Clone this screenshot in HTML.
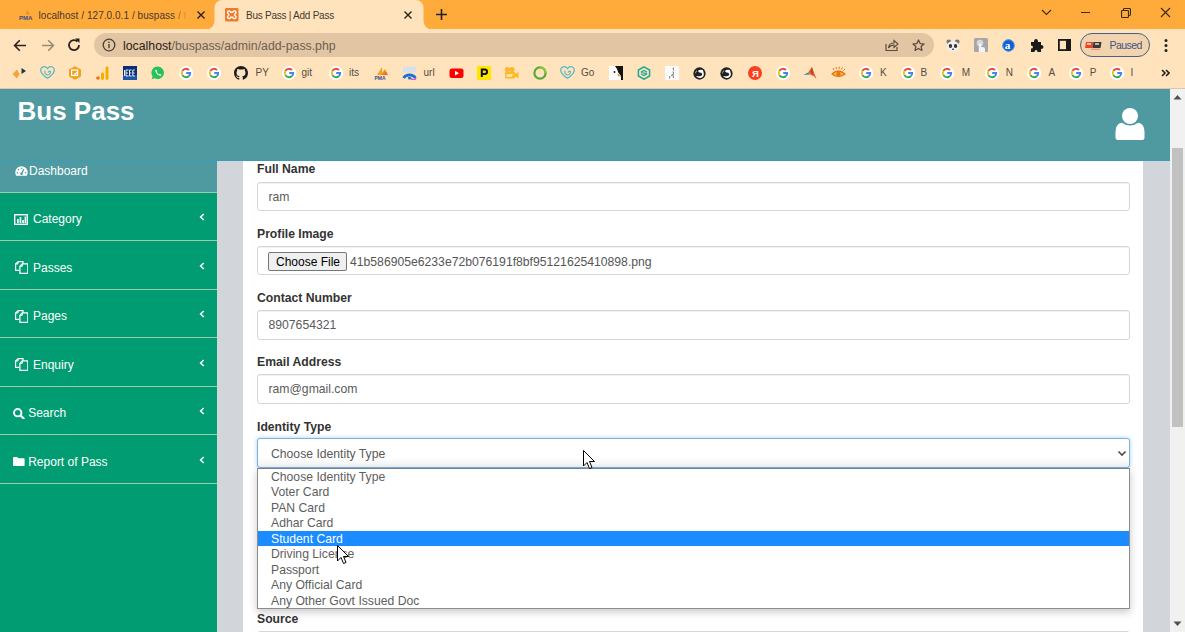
<!DOCTYPE html>
<html><head><meta charset="utf-8">
<style>
*{box-sizing:border-box;margin:0;padding:0}
html,body{width:1185px;height:632px;overflow:hidden;background:#fff;font-family:"Liberation Sans",sans-serif;position:relative}
.a{position:absolute}
#tabbar{left:0;top:0;width:1185px;height:29px;background:#ffab3b}
#toolbar{left:0;top:29px;width:1185px;height:59px;background:#ffe3bc}
#sep{left:0;top:88px;width:1185px;height:1px;background:#d8c7ad}
#page{left:0;top:89px;width:1185px;height:543px;background:#d2d5da;overflow:hidden}
#header{left:0;top:0;width:1170px;height:72px;background:#4e9aa0;border-bottom:1px solid #3a9cb6}
#sidebar{left:0;top:72px;width:217px;height:471px;background:#029c72}
#content{left:243px;top:72px;width:900px;height:471px;background:#fff}
#scroll{left:1170px;top:0;width:15px;height:543px;background:#f1f1f1}
.tabtxt{font-size:10px;line-height:12px;letter-spacing:-0.25px;color:#45392c;white-space:nowrap}
.bm{font-size:10px;line-height:12px;color:#574b41;white-space:nowrap}
.lbl{position:absolute;left:257px;font-size:12.2px;font-weight:bold;color:#333;white-space:nowrap;line-height:14px}
.inp{position:absolute;left:257px;width:873px;height:29px;border:1px solid #d6d6d6;border-radius:3px;background:#fff;box-shadow:inset 0 1px 1px rgba(0,0,0,.06)}
.itxt{position:absolute;left:10.5px;top:6.6px;font-size:12.2px;color:#5a5a5a;line-height:14px;white-space:nowrap}
.side{position:absolute;left:0;width:217px;height:1px;background:#9ccbae}
.stxt{position:absolute;font-size:12px;color:#fff;white-space:nowrap;line-height:14px}
.chev{position:absolute;left:199px;width:6px;height:8px}
.opt{position:absolute;left:0;width:871px;height:15.5px;font-size:12.2px;color:#5e5e5e;line-height:15px;padding-left:13px;white-space:nowrap}
</style></head><body>
<!-- ============ CHROME ============ -->
<div id="tabbar" class="a"></div>
<div id="toolbar" class="a"></div>
<!-- active tab -->
<svg class="a" style="left:205px;top:0" width="230" height="30" viewBox="0 0 230 30">
  <path d="M0 29.5 Q9.5 29.5 9.5 20 L9.5 8.5 Q9.5 0 18 0 L210 0 Q218.5 0 218.5 8.5 L218.5 20 Q218.5 29.5 228 29.5 Z" fill="#ffe3bc"/>
</svg>
<!-- inactive tab content -->
<div class="a" style="left:18px;top:8px;width:16px;height:14px">
  <svg width="16" height="14" viewBox="0 0 16 14"><path d="M9 2 L12 7 L8 6 Z" fill="#f08a1c"/><text x="1" y="12" font-size="6" font-weight="bold" fill="#3a4a8a" font-family="Liberation Sans">PMA</text></svg>
</div>
<div class="a tabtxt" style="left:38.5px;top:9.9px;width:152px;overflow:hidden;letter-spacing:0.05px">localhost / 127.0.0.1 / buspass / t</div><div class="a" style="left:172px;top:6px;width:20px;height:16px;background:linear-gradient(to right,rgba(255,171,59,0),#ffab3b 80%)"></div>
<svg class="a" style="left:196px;top:10px" width="10" height="10" viewBox="0 0 10 10"><path d="M1.5 1.5 L8.5 8.5 M8.5 1.5 L1.5 8.5" stroke="#2a2015" stroke-width="1.4"/></svg>
<!-- active tab content -->
<svg class="a" style="left:225px;top:8px" width="13.5" height="13.5" viewBox="0 0 14 14"><rect x="0" y="0" width="14" height="14" rx="1.5" fill="#ee7a2c"/><path d="M4.2 3 Q2.6 3 2.6 4.6 Q2.6 5.8 3.8 6.3 L3.8 7.7 Q2.6 8.2 2.6 9.4 Q2.6 11 4.2 11 Q5.6 11 6 9.6 H8 Q8.4 11 9.8 11 Q11.4 11 11.4 9.4 Q11.4 8.2 10.2 7.7 L10.2 6.3 Q11.4 5.8 11.4 4.6 Q11.4 3 9.8 3 Q8.4 3 8 4.4 H6 Q5.6 3 4.2 3 Z" fill="none" stroke="#fff" stroke-width="1.4"/></svg>
<div class="a tabtxt" style="left:246px;top:9.9px">Bus Pass | Add Pass</div>
<svg class="a" style="left:403px;top:10px" width="10" height="10" viewBox="0 0 10 10"><path d="M1.5 1.5 L8.5 8.5 M8.5 1.5 L1.5 8.5" stroke="#2a2015" stroke-width="1.4"/></svg>
<svg class="a" style="left:435px;top:8px" width="13" height="13" viewBox="0 0 13 13"><path d="M6.5 1 V12 M1 6.5 H12" stroke="#222" stroke-width="1.6"/></svg>
<!-- window controls -->
<svg class="a" style="left:1040.5px;top:8.5px" width="11" height="8" viewBox="0 0 11 8"><path d="M1 1 L5.5 5.5 L10 1" fill="none" stroke="#3a2a10" stroke-width="1.1"/></svg>
<div class="a" style="left:1081px;top:12px;width:9px;height:1px;background:#3a2a10"></div>
<svg class="a" style="left:1120.5px;top:7.5px" width="10" height="10" viewBox="0 0 10 10"><rect x="0.55" y="2.55" width="6.9" height="6.9" rx="0.8" fill="none" stroke="#3a2a10" stroke-width="1.1"/><path d="M2.5 2.5 V1.4 Q2.5 0.55 3.4 0.55 H8.6 Q9.45 0.55 9.45 1.4 V6.6 Q9.45 7.45 8.6 7.45 H7.5" fill="none" stroke="#3a2a10" stroke-width="1.1"/></svg>
<svg class="a" style="left:1160px;top:7px" width="11" height="11" viewBox="0 0 11 11"><path d="M1 1 L10 10 M10 1 L1 10" stroke="#3a2a10" stroke-width="1.1"/></svg>

<!-- toolbar nav -->
<svg class="a" style="left:12.5px;top:38.5px" width="14" height="13" viewBox="0 0 14 13"><path d="M13 6.5 H1.8 M6.8 1.3 L1.6 6.5 L6.8 11.7" fill="none" stroke="#2a2420" stroke-width="1.6"/></svg>
<svg class="a" style="left:40.5px;top:38.5px" width="14" height="13" viewBox="0 0 14 13"><path d="M1 6.5 H12.2 M7.2 1.3 L12.4 6.5 L7.2 11.7" fill="none" stroke="#9a8a78" stroke-width="1.6"/></svg>
<svg class="a" style="left:66px;top:37px" width="16" height="16" viewBox="0 0 16 16"><path d="M13 8 A5 5 0 1 1 11.5 4.5" fill="none" stroke="#2a2420" stroke-width="1.8"/><path d="M9 1.5 L13.5 1.5 L13.5 6 Z" fill="#2a2420"/></svg>
<!-- address bar -->
<div class="a" style="left:94px;top:33px;width:840px;height:24px;border-radius:12px;background:#e2c6a3"></div>
<svg class="a" style="left:102px;top:38px" width="14" height="14" viewBox="0 0 14 14"><circle cx="7" cy="7" r="5.8" fill="none" stroke="#4a3f35" stroke-width="1.3"/><rect x="6.3" y="6" width="1.4" height="4.2" fill="#4a3f35"/><rect x="6.3" y="3.6" width="1.4" height="1.4" fill="#4a3f35"/></svg>
<div class="a" style="left:123px;top:38.5px;font-size:12.3px;line-height:15px;white-space:nowrap;color:#6e6050"><span style="color:#2a2018">localhost</span>/buspass/admin/add-pass.php</div>
<!-- share / star -->
<svg class="a" style="left:884px;top:38px" width="15" height="14" viewBox="0 0 15 14"><path d="M2 6 V12.5 H13 V9" fill="none" stroke="#5a4c40" stroke-width="1.2"/><path d="M4.5 10 Q5 5 10 5 V2.5 L14 6 L10 9.5 V7 Q6.5 7 4.5 10 Z" fill="none" stroke="#5a4c40" stroke-width="1.2"/></svg>
<svg class="a" style="left:912px;top:39px" width="13" height="13" viewBox="0 0 15 15"><path d="M7.5 1.2 L9.4 5.3 L13.8 5.7 L10.5 8.7 L11.5 13.2 L7.5 10.9 L3.5 13.2 L4.5 8.7 L1.2 5.7 L5.6 5.3 Z" fill="none" stroke="#5a4c40" stroke-width="1.5" stroke-linejoin="round"/></svg>
<!-- extension icons -->
<svg class="a" style="left:945px;top:38px" width="16" height="15" viewBox="0 0 16 16"><circle cx="3.5" cy="4" r="2.5" fill="#777"/><circle cx="12.5" cy="4" r="2.5" fill="#777"/><ellipse cx="8" cy="9" rx="6.5" ry="5.8" fill="#eee"/><ellipse cx="5.3" cy="8.5" rx="1.8" ry="2.2" fill="#333"/><ellipse cx="10.7" cy="8.5" rx="1.8" ry="2.2" fill="#333"/><ellipse cx="8" cy="12" rx="1.2" ry="0.8" fill="#333"/></svg>
<svg class="a" style="left:974px;top:38px" width="14" height="14" viewBox="0 0 14 14"><rect width="14" height="14" rx="1.5" fill="#a6a6a6"/><circle cx="6" cy="5" r="3.3" fill="#d8d8d8"/><path d="M4.8 14 V6.5 Q4.8 5.3 6 5.3 Q7.2 5.3 7.2 6.5 V9 Q9 8.6 10.5 9.5 Q11.2 10.5 11 14 Z" fill="#f2f4f8"/></svg>
<svg class="a" style="left:1001.5px;top:38.5px" width="13" height="13" viewBox="0 0 14 14"><circle cx="7" cy="7" r="6.6" fill="#0f5fd6"/><circle cx="7" cy="7" r="6.2" fill="none" stroke="#7fb0f0" stroke-width="0.7"/><text x="2.9" y="10.8" font-size="12" font-weight="bold" fill="#fff" font-family="Liberation Serif">a</text></svg>
<svg class="a" style="left:1029px;top:38px" width="15" height="15" viewBox="0 0 15 15"><path d="M2 4 H5 Q5 1 7 1 Q9 1 9 4 H12 V7 Q14.5 7 14.5 9 Q14.5 11 12 11 V14 H8.5 Q8.5 12 7 12 Q5.5 12 5.5 14 H2 V10.5 Q4 10.5 4 9 Q4 7.5 2 7.5 Z" fill="#1a1a1a"/></svg>
<svg class="a" style="left:1058px;top:39px" width="13" height="12" viewBox="0 0 13 12"><rect x="0.9" y="0.9" width="11.2" height="10.2" fill="none" stroke="#1a1a1a" stroke-width="1.8"/><rect x="8" y="0.9" width="4.1" height="10.2" fill="#1a1a1a"/></svg>
<div class="a" style="left:1080px;top:33px;width:70px;height:24px;border-radius:12px;border:1.5px solid #4b5d85;background:#f1d4ae"></div>
<svg class="a" style="left:1084.5px;top:41.5px" width="17" height="8" viewBox="0 0 17 8"><path d="M1 0 H8.5 L7.5 6 H0 Z" fill="#e5472a"/><path d="M8.5 0 H16.5 L15.5 6 H7.5 Z" fill="#3c3a38"/><path d="M2 2 H6 M10 2 H14" stroke="#fff" stroke-width="1.6" opacity=".85"/><rect x="6" y="6.8" width="9" height="0.8" fill="#e5472a" opacity=".7"/></svg>
<div class="a" style="left:1109.5px;top:39px;font-size:10.5px;letter-spacing:-0.55px;line-height:12px;color:#3f5283">Paused</div>
<svg class="a" style="left:1163px;top:38px" width="6" height="15" viewBox="0 0 6 15"><circle cx="3" cy="2.5" r="1.5" fill="#222"/><circle cx="3" cy="7.5" r="1.5" fill="#222"/><circle cx="3" cy="12.5" r="1.5" fill="#222"/></svg>

<!-- bookmarks bar -->
<svg class="a" style="left:11px;top:66px" width="16" height="14" viewBox="0 0 16 14"><path d="M1.5 8 L6 3.5 L8.5 8 L6 12.5 Z" fill="#f7a23c"/><path d="M10.5 2 L15 5 L10.5 8 Z" fill="#173b40"/></svg>
<svg class="a" style="left:40px;top:66px" width="15" height="13" viewBox="0 0 15 13"><path d="M7.5 12.3 C2 8.5 0.7 6.5 0.7 4.2 C0.7 2 2.4 0.7 4.2 0.7 C5.6 0.7 6.8 1.5 7.5 2.5 C8.2 1.5 9.4 0.7 10.8 0.7 C12.6 0.7 14.3 2 14.3 4.2 C14.3 6.5 13 8.5 7.5 12.3 Z" fill="none" stroke="#5bb8c4" stroke-width="1.3"/><path d="M5 4.5 Q4 8 7.5 9 Q10.5 8.5 10.5 5.5 Q9 4.5 8 6.5" fill="none" stroke="#5bb8c4" stroke-width="1.1"/></svg>
<svg class="a" style="left:68px;top:66px" width="14" height="14" viewBox="0 0 14 14"><path d="M7 0.3 L13 3.5 V10.5 L7 13.7 L1 10.5 V3.5 Z" fill="#f2a11c"/><rect x="3.6" y="4" width="6" height="5.5" fill="none" stroke="#fff" stroke-width="1.2"/><path d="M6 9 L9.5 6" stroke="#fff" stroke-width="1.2"/></svg>
<svg class="a" style="left:96px;top:66px" width="13" height="14" viewBox="0 0 13 14"><circle cx="2" cy="12" r="1.8" fill="#e8710a"/><rect x="5" y="6.5" width="3" height="7.5" rx="1.4" fill="#f9ab00"/><rect x="9.5" y="0.5" width="3" height="13.5" rx="1.4" fill="#f9ab00"/></svg>
<svg class="a" style="left:123px;top:66px" width="14" height="14" viewBox="0 0 14 14"><rect width="14" height="14" fill="#0a2e78"/><rect x="0" y="9" width="14" height="5" fill="#1d56a8"/><g fill="none" stroke="#e8eef8" stroke-width="1"><path d="M1.5 4 V10"/><path d="M5.5 4 H3 V10 H5.5 M3 7 H5"/><path d="M8.5 4 H6.5 V10 H8.5 M6.5 7 H8.3"/><path d="M11.8 4 H9.8 V10 H11.8 M9.8 7 H11.6"/></g></svg>
<svg class="a" style="left:151px;top:66px" width="14" height="14" viewBox="0 0 14 14"><path d="M7 0.5 A6.3 6.3 0 1 1 3.6 12.3 L0.6 13.3 L1.6 10.4 A6.3 6.3 0 0 1 7 0.5 Z" fill="#25c15a"/><path d="M4.3 4 Q4.2 6.3 6 8.1 Q7.8 9.9 10 9.7 L10.3 8.6 L8.8 7.9 L8.1 8.5 Q6.6 7.7 5.6 6 L6.2 5.3 L5.5 3.8 Z" fill="#fff"/></svg>
<svg class="a" style="left:179px;top:66px" width="14" height="14" viewBox="0 0 14 14"><circle cx="7" cy="7" r="7" fill="#fff"/><g fill="none" stroke-width="1.9"><path d="M7.2 7 H11.2 A4.2 4.2 0 0 1 9.97 9.97" stroke="#4285f4"/><path d="M9.97 9.97 A4.2 4.2 0 0 1 3.36 9.1" stroke="#34a853"/><path d="M3.36 9.1 A4.2 4.2 0 0 1 3.36 4.9" stroke="#fbbc05"/><path d="M3.36 4.9 A4.2 4.2 0 0 1 9.97 4.03" stroke="#ea4335"/></g></svg>
<svg class="a" style="left:206.5px;top:66px" width="14" height="14" viewBox="0 0 14 14"><circle cx="7" cy="7" r="7" fill="#fff"/><g fill="none" stroke-width="1.9"><path d="M7.2 7 H11.2 A4.2 4.2 0 0 1 9.97 9.97" stroke="#4285f4"/><path d="M9.97 9.97 A4.2 4.2 0 0 1 3.36 9.1" stroke="#34a853"/><path d="M3.36 9.1 A4.2 4.2 0 0 1 3.36 4.9" stroke="#fbbc05"/><path d="M3.36 4.9 A4.2 4.2 0 0 1 9.97 4.03" stroke="#ea4335"/></g></svg>
<svg class="a" style="left:234px;top:66px" width="14" height="14" viewBox="0 0 16 16"><path fill="#1b1f23" d="M8 0C3.58 0 0 3.58 0 8c0 3.54 2.29 6.53 5.47 7.59.4.07.55-.17.55-.38 0-.19-.01-.82-.01-1.49-2.01.37-2.53-.49-2.69-.94-.09-.23-.48-.94-.82-1.13-.28-.15-.68-.52-.01-.53.63-.01 1.08.58 1.23.82.72 1.21 1.87.87 2.33.66.07-.52.28-.87.51-1.07-1.78-.2-3.64-.89-3.64-3.95 0-.87.31-1.59.82-2.15-.08-.2-.36-1.02.08-2.12 0 0 .67-.21 2.2.82.64-.18 1.32-.27 2-.27.68 0 1.36.09 2 .27 1.53-1.04 2.2-.82 2.2-.82.44 1.1.16 1.92.08 2.12.51.56.82 1.27.82 2.15 0 3.07-1.87 3.75-3.65 3.95.29.25.54.73.54 1.48 0 1.07-.01 1.93-.01 2.2 0 .21.15.46.55.38A8.013 8.013 0 0016 8c0-4.42-3.58-8-8-8z"/></svg>
<div class="a bm" style="left:255.5px;top:66.5px">PY</div>
<svg class="a" style="left:281.5px;top:66px" width="14" height="14" viewBox="0 0 14 14"><circle cx="7" cy="7" r="7" fill="#fff"/><g fill="none" stroke-width="1.9"><path d="M7.2 7 H11.2 A4.2 4.2 0 0 1 9.97 9.97" stroke="#4285f4"/><path d="M9.97 9.97 A4.2 4.2 0 0 1 3.36 9.1" stroke="#34a853"/><path d="M3.36 9.1 A4.2 4.2 0 0 1 3.36 4.9" stroke="#fbbc05"/><path d="M3.36 4.9 A4.2 4.2 0 0 1 9.97 4.03" stroke="#ea4335"/></g></svg>
<div class="a bm" style="left:301.5px;top:66.5px">git</div>
<svg class="a" style="left:329px;top:66px" width="14" height="14" viewBox="0 0 14 14"><circle cx="7" cy="7" r="7" fill="#fff"/><g fill="none" stroke-width="1.9"><path d="M7.2 7 H11.2 A4.2 4.2 0 0 1 9.97 9.97" stroke="#4285f4"/><path d="M9.97 9.97 A4.2 4.2 0 0 1 3.36 9.1" stroke="#34a853"/><path d="M3.36 9.1 A4.2 4.2 0 0 1 3.36 4.9" stroke="#fbbc05"/><path d="M3.36 4.9 A4.2 4.2 0 0 1 9.97 4.03" stroke="#ea4335"/></g></svg>
<div class="a bm" style="left:349px;top:66.5px">its</div>
<svg class="a" style="left:374px;top:66px" width="15" height="14" viewBox="0 0 15 14"><path d="M3 9 L8 1 L8.5 9 Z" fill="#f7a21b"/><path d="M7 9 L11 3 L13 9 Z" fill="#f18d1b"/><path d="M9 9 L12 5 L14 9 Z" fill="#e8741c"/><text x="0.5" y="13.5" font-size="5" font-weight="bold" fill="#3f4e8c" font-family="Liberation Sans">PMA</text></svg>
<svg class="a" style="left:401.5px;top:66px" width="15" height="14" viewBox="0 0 15 14"><rect x="1" y="0.5" width="13" height="6" fill="#cfe0f2" opacity=".8"/><path d="M1.5 12 A7 6.5 0 0 1 13.5 12" fill="none" stroke="#1e70d6" stroke-width="2.6"/><path d="M9 12 A2.5 2.5 0 0 0 13.8 12" fill="none" stroke="#c35bd6" stroke-width="1.5"/><circle cx="7.5" cy="12" r="1.6" fill="#1e70d6"/></svg>
<div class="a bm" style="left:423.5px;top:66.5px">url</div>
<svg class="a" style="left:449px;top:66px" width="15" height="14" viewBox="0 0 15 14"><rect x="0.5" y="2.5" width="14" height="9.5" rx="2.5" fill="#f00"/><path d="M6 4.8 L10 7.2 L6 9.6 Z" fill="#fff"/></svg>
<svg class="a" style="left:477px;top:66px" width="14" height="14" viewBox="0 0 14 14"><rect width="14" height="14" fill="#ffe500"/><path d="M4.8 11 V3.5 H7.8 Q10 3.5 10 5.8 Q10 8 7.8 8 H4.8" fill="none" stroke="#111" stroke-width="2"/></svg>
<svg class="a" style="left:504px;top:66px" width="15" height="14" viewBox="0 0 15 14"><circle cx="3.5" cy="3.5" r="2.6" fill="#fbb827"/><circle cx="8" cy="3.5" r="2.6" fill="#fbb827"/><rect x="1" y="6" width="10" height="6.5" rx="1" fill="#fbb827"/><path d="M11 8 L14.5 6 V12.5 L11 10.5 Z" fill="#fbb827"/><text x="2.2" y="11.3" font-size="4" fill="#fff" font-family="Liberation Sans" font-weight="bold">GIF</text></svg>
<svg class="a" style="left:532.5px;top:66px" width="14" height="14" viewBox="0 0 14 14"><circle cx="7" cy="7" r="5.6" fill="none" stroke="#58a83a" stroke-width="2.2"/><path d="M7 1.4 A5.6 5.6 0 0 1 12.6 7" fill="none" stroke="#8cc63f" stroke-width="2.2"/></svg>
<svg class="a" style="left:560px;top:66px" width="15" height="13" viewBox="0 0 15 13"><path d="M7.5 12.3 C2 8.5 0.7 6.5 0.7 4.2 C0.7 2 2.4 0.7 4.2 0.7 C5.6 0.7 6.8 1.5 7.5 2.5 C8.2 1.5 9.4 0.7 10.8 0.7 C12.6 0.7 14.3 2 14.3 4.2 C14.3 6.5 13 8.5 7.5 12.3 Z" fill="none" stroke="#5bb8c4" stroke-width="1.3"/><path d="M5 4.5 Q4 8 7.5 9 Q10.5 8.5 10.5 5.5 Q9 4.5 8 6.5" fill="none" stroke="#5bb8c4" stroke-width="1.1"/></svg>
<div class="a bm" style="left:581px;top:66.5px">Go</div>
<svg class="a" style="left:609px;top:66px" width="14" height="14" viewBox="0 0 14 14"><rect width="14" height="14" fill="#fff"/><path d="M6 0 H14 V14 H12 Q12.5 9 9.5 7 Q8.5 3 6 0 Z" fill="#111"/><circle cx="5.5" cy="6" r="0.9" fill="#111"/><path d="M8.5 7.5 L12 9.5 L9 10.5 Z" fill="#f6921e"/></svg>
<svg class="a" style="left:637px;top:66px" width="14" height="14" viewBox="0 0 14 14"><path d="M7 0.8 L12.6 4 V10 L7 13.2 L1.4 10 V4 Z" fill="none" stroke="#1ea896" stroke-width="1.5"/><path d="M3.8 6.3 L7 4.4 L10 6 M4 8 L7 9.6 L10.2 7.7 M4 6.3 L10 7.7" fill="none" stroke="#1ea896" stroke-width="1.3"/></svg>
<svg class="a" style="left:664.5px;top:66px" width="14" height="14" viewBox="0 0 14 14"><rect width="14" height="14" fill="#fbfbfb"/><path d="M8.5 1.5 Q7.5 3 8.8 4.5 M8 5.5 Q9 7 8 8.5 L6 9.5 M8 8.5 L8.5 12 M5 10 L4.5 12.5" fill="none" stroke="#666" stroke-width="0.9"/></svg>
<svg class="a" style="left:692.5px;top:66.5px" width="13" height="13" viewBox="0 0 14 14"><circle cx="7" cy="7" r="6.6" fill="#222"/><path d="M10.5 3.2 Q7.5 2.3 5.2 4.2 Q6.8 6.3 9 6.2 Q10.8 7.3 9.2 9.3 Q6.5 10.3 3.2 9.8 Q5.5 12.5 9 11.6 Q12.2 10 11.6 7 Q11.2 4.5 10.5 3.2 Z M2.2 7.2 Q2.5 4.8 4.3 3.2 Q4 5.5 2.2 7.2 Z" fill="#fff"/></svg>
<svg class="a" style="left:720px;top:66.5px" width="13" height="13" viewBox="0 0 14 14"><circle cx="7" cy="7" r="6.6" fill="#222"/><path d="M10.5 3.2 Q7.5 2.3 5.2 4.2 Q6.8 6.3 9 6.2 Q10.8 7.3 9.2 9.3 Q6.5 10.3 3.2 9.8 Q5.5 12.5 9 11.6 Q12.2 10 11.6 7 Q11.2 4.5 10.5 3.2 Z M2.2 7.2 Q2.5 4.8 4.3 3.2 Q4 5.5 2.2 7.2 Z" fill="#fff"/></svg>
<svg class="a" style="left:747.5px;top:66px" width="14" height="14" viewBox="0 0 14 14"><circle cx="7" cy="7" r="7" fill="#fc3f1d"/><text x="4" y="11" font-size="9.5" font-weight="bold" fill="#fff" font-family="Liberation Sans">Я</text></svg>
<svg class="a" style="left:776px;top:66px" width="14" height="14" viewBox="0 0 14 14"><circle cx="7" cy="7" r="7" fill="#fff"/><g fill="none" stroke-width="1.9"><path d="M7.2 7 H11.2 A4.2 4.2 0 0 1 9.97 9.97" stroke="#4285f4"/><path d="M9.97 9.97 A4.2 4.2 0 0 1 3.36 9.1" stroke="#34a853"/><path d="M3.36 9.1 A4.2 4.2 0 0 1 3.36 4.9" stroke="#fbbc05"/><path d="M3.36 4.9 A4.2 4.2 0 0 1 9.97 4.03" stroke="#ea4335"/></g></svg>
<svg class="a" style="left:803px;top:66px" width="14" height="14" viewBox="0 0 14 14"><path d="M0.5 9 L5 6.5 L7 8.5 Z" fill="#3b7fc4"/><path d="M5 6.5 L9 1 L13.5 13 L10.5 10 L7 8.5 Z" fill="#e16737"/><path d="M9 1 L7.5 6 L10.5 10 Z" fill="#b7421a"/></svg>
<svg class="a" style="left:830.5px;top:66px" width="15" height="14" viewBox="0 0 15 14"><path d="M1 8 Q7.5 2 14 8 Q7.5 13 1 8 Z" fill="#fbc02d" stroke="#e8731a" stroke-width="1.2"/><circle cx="7.5" cy="8" r="2.2" fill="#e8731a"/><path d="M3 4 L2 2 M5.5 3 L5 1 M8 3 L8.3 0.8 M10.5 3.3 L11.5 1.5 M12.5 4.5 L14 3" stroke="#e8731a" stroke-width="1"/></svg>
<svg class="a" style="left:859px;top:66px" width="14" height="14" viewBox="0 0 14 14"><circle cx="7" cy="7" r="7" fill="#fff"/><g fill="none" stroke-width="1.9"><path d="M7.2 7 H11.2 A4.2 4.2 0 0 1 9.97 9.97" stroke="#4285f4"/><path d="M9.97 9.97 A4.2 4.2 0 0 1 3.36 9.1" stroke="#34a853"/><path d="M3.36 9.1 A4.2 4.2 0 0 1 3.36 4.9" stroke="#fbbc05"/><path d="M3.36 4.9 A4.2 4.2 0 0 1 9.97 4.03" stroke="#ea4335"/></g></svg>
<div class="a bm" style="left:880px;top:66.5px">K</div>
<svg class="a" style="left:900.5px;top:66px" width="14" height="14" viewBox="0 0 14 14"><circle cx="7" cy="7" r="7" fill="#fff"/><g fill="none" stroke-width="1.9"><path d="M7.2 7 H11.2 A4.2 4.2 0 0 1 9.97 9.97" stroke="#4285f4"/><path d="M9.97 9.97 A4.2 4.2 0 0 1 3.36 9.1" stroke="#34a853"/><path d="M3.36 9.1 A4.2 4.2 0 0 1 3.36 4.9" stroke="#fbbc05"/><path d="M3.36 4.9 A4.2 4.2 0 0 1 9.97 4.03" stroke="#ea4335"/></g></svg>
<div class="a bm" style="left:920.5px;top:66.5px">B</div>
<svg class="a" style="left:940.3px;top:66px" width="14" height="14" viewBox="0 0 14 14"><circle cx="7" cy="7" r="7" fill="#fff"/><g fill="none" stroke-width="1.9"><path d="M7.2 7 H11.2 A4.2 4.2 0 0 1 9.97 9.97" stroke="#4285f4"/><path d="M9.97 9.97 A4.2 4.2 0 0 1 3.36 9.1" stroke="#34a853"/><path d="M3.36 9.1 A4.2 4.2 0 0 1 3.36 4.9" stroke="#fbbc05"/><path d="M3.36 4.9 A4.2 4.2 0 0 1 9.97 4.03" stroke="#ea4335"/></g></svg>
<div class="a bm" style="left:961.8px;top:66.5px">M</div>
<svg class="a" style="left:985px;top:66px" width="14" height="14" viewBox="0 0 14 14"><circle cx="7" cy="7" r="7" fill="#fff"/><g fill="none" stroke-width="1.9"><path d="M7.2 7 H11.2 A4.2 4.2 0 0 1 9.97 9.97" stroke="#4285f4"/><path d="M9.97 9.97 A4.2 4.2 0 0 1 3.36 9.1" stroke="#34a853"/><path d="M3.36 9.1 A4.2 4.2 0 0 1 3.36 4.9" stroke="#fbbc05"/><path d="M3.36 4.9 A4.2 4.2 0 0 1 9.97 4.03" stroke="#ea4335"/></g></svg>
<div class="a bm" style="left:1005.7px;top:66.5px">N</div>
<svg class="a" style="left:1027.3px;top:66px" width="14" height="14" viewBox="0 0 14 14"><circle cx="7" cy="7" r="7" fill="#fff"/><g fill="none" stroke-width="1.9"><path d="M7.2 7 H11.2 A4.2 4.2 0 0 1 9.97 9.97" stroke="#4285f4"/><path d="M9.97 9.97 A4.2 4.2 0 0 1 3.36 9.1" stroke="#34a853"/><path d="M3.36 9.1 A4.2 4.2 0 0 1 3.36 4.9" stroke="#fbbc05"/><path d="M3.36 4.9 A4.2 4.2 0 0 1 9.97 4.03" stroke="#ea4335"/></g></svg>
<div class="a bm" style="left:1048.4px;top:66.5px">A</div>
<svg class="a" style="left:1069.4px;top:66px" width="14" height="14" viewBox="0 0 14 14"><circle cx="7" cy="7" r="7" fill="#fff"/><g fill="none" stroke-width="1.9"><path d="M7.2 7 H11.2 A4.2 4.2 0 0 1 9.97 9.97" stroke="#4285f4"/><path d="M9.97 9.97 A4.2 4.2 0 0 1 3.36 9.1" stroke="#34a853"/><path d="M3.36 9.1 A4.2 4.2 0 0 1 3.36 4.9" stroke="#fbbc05"/><path d="M3.36 4.9 A4.2 4.2 0 0 1 9.97 4.03" stroke="#ea4335"/></g></svg>
<div class="a bm" style="left:1089.7px;top:66.5px">P</div>
<svg class="a" style="left:1109.7px;top:66px" width="14" height="14" viewBox="0 0 14 14"><circle cx="7" cy="7" r="7" fill="#fff"/><g fill="none" stroke-width="1.9"><path d="M7.2 7 H11.2 A4.2 4.2 0 0 1 9.97 9.97" stroke="#4285f4"/><path d="M9.97 9.97 A4.2 4.2 0 0 1 3.36 9.1" stroke="#34a853"/><path d="M3.36 9.1 A4.2 4.2 0 0 1 3.36 4.9" stroke="#fbbc05"/><path d="M3.36 4.9 A4.2 4.2 0 0 1 9.97 4.03" stroke="#ea4335"/></g></svg>
<div class="a bm" style="left:1130.6px;top:66.5px">I</div>
<svg class="a" style="left:1161px;top:69px" width="9" height="8" viewBox="0 0 9 8"><path d="M1 1 L4 4 L1 7 M5 1 L8 4 L5 7" fill="none" stroke="#222" stroke-width="1.6"/></svg>

<div id="sep" class="a"></div>

<!-- ============ PAGE ============ -->
<div id="page" class="a">
  <div id="header" class="a">
    <div class="a" style="left:17.5px;top:6.8px;font-size:26px;font-weight:bold;color:#fff;line-height:30px;white-space:nowrap">Bus Pass</div>
    <svg class="a" style="left:1114px;top:17px" width="32" height="36" viewBox="0 0 32 36">
      <circle cx="16" cy="10" r="8" fill="#fff"/>
      <path d="M1.5 34 V26 Q1.5 17.5 8 16.8 Q11.5 19.6 16 19.6 Q20.5 19.6 24 16.8 Q30.5 17.5 30.5 26 V31.5 Q30.5 34 28 34 H4 Q1.5 34 1.5 31.5 Z" fill="#fff"/>
    </svg>
  </div>
  <!-- dashboard item (teal) -->
<div class="a" style="left:0;top:72px;width:217px;height:31px;background:#4e9aa0"></div>
<div id="sidebar" class="a" style="top:104px;height:439px"></div>
<div class="a" style="left:243px;top:72px;width:900px;height:471px;background:#fff"></div>
<div class="side" style="top:103px"></div>
<div class="side" style="top:151px"></div>
<div class="side" style="top:200px"></div>
<div class="side" style="top:248px"></div>
<div class="side" style="top:297px"></div>
<div class="side" style="top:345px"></div>
<div class="side" style="top:394px"></div>
<svg class="a" style="left:14.5px;top:76.5px" width="13" height="10" viewBox="0 0 13 10"><path d="M6.5 0.3 A6.2 6.2 0 0 0 0.3 6.5 Q0.3 8.3 1.2 9.7 H11.8 Q12.7 8.3 12.7 6.5 A6.2 6.2 0 0 0 6.5 0.3 Z" fill="#fff"/><path d="M6.5 7.8 L8.8 3.2" stroke="#4e9aa0" stroke-width="1.3"/><circle cx="6.5" cy="7.8" r="1.3" fill="#4e9aa0"/><circle cx="2.4" cy="6.8" r=".8" fill="#4e9aa0"/><circle cx="3.6" cy="3.6" r=".8" fill="#4e9aa0"/><circle cx="6.5" cy="2.3" r=".8" fill="#4e9aa0"/><circle cx="10.6" cy="6.8" r=".8" fill="#4e9aa0"/></svg>
<div class="stxt" style="left:29px;top:74.6px">Dashboard</div>
<svg class="a" style="left:14px;top:124.5px" width="14" height="11" viewBox="0 0 14 11"><rect x="0.7" y="0.7" width="12.6" height="9.6" fill="none" stroke="#fff" stroke-width="1.4"/><rect x="3" y="5" width="1.7" height="4" fill="#fff"/><rect x="5.6" y="3" width="1.7" height="6" fill="#fff"/><rect x="8.2" y="6" width="1.7" height="3" fill="#fff"/><rect x="10.6" y="2.5" width="1.5" height="6.5" fill="#fff"/></svg>
<div class="stxt" style="left:33px;top:122.8px">Category</div>
<svg class="chev" style="top:124px" viewBox="0 0 6 8"><path d="M4.8 1 L1.6 4 L4.8 7" fill="none" stroke="#fff" stroke-width="1.5"/></svg>
<svg class="a" style="left:14.5px;top:172.3px" width="13.5" height="13" viewBox="0 0 13.5 13"><path d="M3 0.6 H8 V2.8 M3 0.6 L0.6 3 V9.4 H4.4" fill="none" stroke="#fff" stroke-width="1.2"/><path d="M3 0.6 V3 H0.6" fill="none" stroke="#fff" stroke-width="1"/><path d="M7.3 2.9 H12.8 V12.4 H4.9 V5.3 Z" fill="none" stroke="#fff" stroke-width="1.2"/><path d="M7.3 2.9 V5.3 H4.9" fill="none" stroke="#fff" stroke-width="1"/></svg>
<div class="stxt" style="left:33px;top:171.6px">Passes</div>
<svg class="chev" style="top:172.8px" viewBox="0 0 6 8"><path d="M4.8 1 L1.6 4 L4.8 7" fill="none" stroke="#fff" stroke-width="1.5"/></svg>
<svg class="a" style="left:14.5px;top:220.85px" width="13.5" height="13" viewBox="0 0 13.5 13"><path d="M3 0.6 H8 V2.8 M3 0.6 L0.6 3 V9.4 H4.4" fill="none" stroke="#fff" stroke-width="1.2"/><path d="M3 0.6 V3 H0.6" fill="none" stroke="#fff" stroke-width="1"/><path d="M7.3 2.9 H12.8 V12.4 H4.9 V5.3 Z" fill="none" stroke="#fff" stroke-width="1.2"/><path d="M7.3 2.9 V5.3 H4.9" fill="none" stroke="#fff" stroke-width="1"/></svg>
<div class="stxt" style="left:33px;top:220.15px">Pages</div>
<svg class="chev" style="top:221.35px" viewBox="0 0 6 8"><path d="M4.8 1 L1.6 4 L4.8 7" fill="none" stroke="#fff" stroke-width="1.5"/></svg>
<svg class="a" style="left:14.5px;top:269.4px" width="13.5" height="13" viewBox="0 0 13.5 13"><path d="M3 0.6 H8 V2.8 M3 0.6 L0.6 3 V9.4 H4.4" fill="none" stroke="#fff" stroke-width="1.2"/><path d="M3 0.6 V3 H0.6" fill="none" stroke="#fff" stroke-width="1"/><path d="M7.3 2.9 H12.8 V12.4 H4.9 V5.3 Z" fill="none" stroke="#fff" stroke-width="1.2"/><path d="M7.3 2.9 V5.3 H4.9" fill="none" stroke="#fff" stroke-width="1"/></svg>
<div class="stxt" style="left:33px;top:268.7px">Enquiry</div>
<svg class="chev" style="top:269.9px" viewBox="0 0 6 8"><path d="M4.8 1 L1.6 4 L4.8 7" fill="none" stroke="#fff" stroke-width="1.5"/></svg>
<svg class="a" style="left:13px;top:318.9px" width="12" height="11" viewBox="0 0 12 11"><circle cx="4.7" cy="4.7" r="3.7" fill="none" stroke="#fff" stroke-width="1.9"/><path d="M7.6 7.6 L10.6 10.3" stroke="#fff" stroke-width="2.2" stroke-linecap="round"/></svg>
<div class="stxt" style="left:28.2px;top:317.2px">Search</div>
<svg class="chev" style="top:318.4px" viewBox="0 0 6 8"><path d="M4.8 1 L1.6 4 L4.8 7" fill="none" stroke="#fff" stroke-width="1.5"/></svg>
<svg class="a" style="left:13px;top:368px" width="12" height="9" viewBox="0 0 12 9"><path d="M0 1 Q0 0 1 0 H4.2 L5.4 1.3 H11 Q11.6 1.3 11.6 2 V8.3 Q11.6 9 11 9 H0.7 Q0 9 0 8.3 Z" fill="#fff"/></svg>
<div class="stxt" style="left:28.2px;top:365.8px">Report of Pass</div>
<svg class="chev" style="top:367px" viewBox="0 0 6 8"><path d="M4.8 1 L1.6 4 L4.8 7" fill="none" stroke="#fff" stroke-width="1.5"/></svg>
  <!-- scrollbar -->
  <div id="scroll" class="a"></div>
  <svg class="a" style="left:1173px;top:5px" width="9" height="6" viewBox="0 0 9 6"><path d="M0.5 5.5 L4.5 1 L8.5 5.5 Z" fill="#505050"/></svg>
  <div class="a" style="left:1172px;top:59px;width:11px;height:279px;background:#c1c1c1"></div>
  <svg class="a" style="left:1173px;top:532px" width="9" height="6" viewBox="0 0 9 6"><path d="M0.5 0.5 L4.5 5 L8.5 0.5 Z" fill="#505050"/></svg>
</div>
<!-- form -->
<div class="lbl" style="top:162px">Full Name</div>
<div class="inp" style="top:182px"><div class="itxt">ram</div></div>
<div class="lbl" style="top:226.5px">Profile Image</div>
<div class="inp" style="top:246px">
  <div class="a" style="left:10px;top:5px;width:79px;height:19px;background:#efefef;border:1px solid #767676;border-radius:2px"></div>
  <div class="a" style="left:18px;top:8px;font-size:12px;line-height:14px;color:#000;white-space:nowrap">Choose File</div>
  <div class="a" style="left:92px;top:8px;font-size:12.2px;line-height:14px;color:#555;white-space:nowrap">41b586905e6233e72b076191f8bf95121625410898.png</div>
</div>
<div class="lbl" style="top:291px">Contact Number</div>
<div class="inp" style="top:310px;height:30px"><div class="itxt">8907654321</div></div>
<div class="lbl" style="top:355px">Email Address</div>
<div class="inp" style="top:374px;height:30px"><div class="itxt">ram@gmail.com</div></div>
<div class="lbl" style="top:419.5px">Identity Type</div>
<div class="inp" style="top:438px;height:29.5px;border-color:#7eb3dd;box-shadow:0 0 4px rgba(102,175,233,.6)"><div class="a" style="left:0;bottom:0;width:871px;height:10px;background:linear-gradient(rgba(0,0,0,0),rgba(0,0,0,.05))"></div><div class="itxt" style="left:13px;top:8px">Choose Identity Type</div>
  <svg class="a" style="left:858.5px;top:11px" width="10" height="7" viewBox="0 0 10 7"><path d="M1.5 1.5 L5 5 L8.5 1.5" fill="none" stroke="#4a4a4a" stroke-width="1.6"/></svg>
</div>
<div class="lbl" style="top:612px">Source</div>
<div class="inp" style="top:631px"></div>
<!-- dropdown popup -->
<div class="a" style="left:257px;top:468px;width:873px;height:141px;background:#fff;border:1px solid #8c8c8c;border-top-color:#6f8499;box-shadow:0 3px 8px rgba(0,0,0,.22)">
  <div class="opt" style="top:0.6px">Choose Identity Type</div>
  <div class="opt" style="top:16.1px">Voter Card</div>
  <div class="opt" style="top:31.6px">PAN Card</div>
  <div class="opt" style="top:47.1px">Adhar Card</div>
  <div class="a" style="left:0;top:61.5px;width:871px;height:15.3px;background:#1a8cff"></div>
  <div class="opt" style="top:62.6px;color:#fff">Student Card</div>
  <div class="opt" style="top:78.1px">Driving License</div>
  <div class="opt" style="top:93.6px">Passport</div>
  <div class="opt" style="top:109.1px">Any Official Card</div>
  <div class="opt" style="top:124.6px">Any Other Govt Issued Doc</div>
</div>
<!-- cursors -->
<svg class="a" style="left:583px;top:450px" width="13" height="20" viewBox="0 0 13 20"><path d="M0.5 0.5 V16 L4 12.5 L6.5 18.5 L9 17.5 L6.5 11.5 H11.5 Z" fill="#fff" stroke="#000" stroke-width="1"/></svg>
<svg class="a" style="left:337px;top:545px" width="13" height="20" viewBox="0 0 13 20"><path d="M0.5 0.5 V16 L4 12.5 L6.5 18.5 L9 17.5 L6.5 11.5 H11.5 Z" fill="#fff" stroke="#000" stroke-width="1"/></svg>

</body></html>
